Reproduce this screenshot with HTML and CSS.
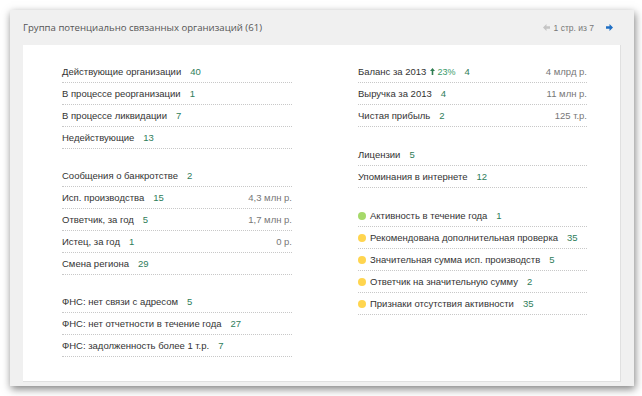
FILE: index.html
```html
<!DOCTYPE html>
<html lang="ru">
<head>
    <meta charset="UTF-8">
    <title>Группа потенциально связанных организаций</title>
    <link rel="stylesheet" href="styles.css">
</head>
<body>
    <div class="panel">
        <div class="panel-head">
            <span class="panel-title">Группа потенциально связанных организаций (61)</span>
            <div class="pager">
                <svg class="arrow" width="7" height="7" viewBox="0 0 7 7"><path d="M0 3.5 L3.5 0 V2.3 H7 V4.7 H3.5 V7 Z" fill="#c4c4c4"/></svg>
                <span class="pager-text">1 стр. из 7</span>
                <svg class="arrow" width="7" height="7" viewBox="0 0 7 7"><path d="M7 3.5 L3.5 0 V2.3 H0 V4.7 H3.5 V7 Z" fill="#1f6fc4"/></svg>
            </div>
        </div>

        <div class="panel-body">
            <!-- left column -->
            <div class="col">
                <div class="group">
                    <div class="row"><span class="label">Действующие организации</span><span class="num">40</span></div>
                    <div class="row"><span class="label">В процессе реорганизации</span><span class="num">1</span></div>
                    <div class="row"><span class="label">В процессе ликвидации</span><span class="num">7</span></div>
                    <div class="row"><span class="label">Недействующие</span><span class="num">13</span></div>
                </div>
                <div class="group">
                    <div class="row"><span class="label">Сообщения о банкротстве</span><span class="num">2</span></div>
                    <div class="row"><span class="label">Исп. производства</span><span class="num">15</span><span class="value">4,3 млн р.</span></div>
                    <div class="row"><span class="label">Ответчик, за год</span><span class="num">5</span><span class="value">1,7 млн р.</span></div>
                    <div class="row"><span class="label">Истец, за год</span><span class="num">1</span><span class="value">0 р.</span></div>
                    <div class="row"><span class="label">Смена региона</span><span class="num">29</span></div>
                </div>
                <div class="group">
                    <div class="row"><span class="label">ФНС: нет связи с адресом</span><span class="num">5</span></div>
                    <div class="row"><span class="label">ФНС: нет отчетности в течение года</span><span class="num">27</span></div>
                    <div class="row"><span class="label">ФНС: задолженность более 1 т.р.</span><span class="num">7</span></div>
                </div>
            </div>

            <!-- right column -->
            <div class="col right">
                <div class="group">
                    <div class="row">
                        <span class="label">Баланс за 2013</span>
                        <span class="growth"><svg width="5" height="7" viewBox="0 0 5 7"><path d="M2.5 0 L5 3 H3.3 V7 H1.7 V3 H0 Z" fill="#2f7d52"/></svg>23%</span>
                        <span class="num">4</span>
                        <span class="value">4 млрд р.</span>
                    </div>
                    <div class="row"><span class="label">Выручка за 2013</span><span class="num">4</span><span class="value">11 млн р.</span></div>
                    <div class="row"><span class="label">Чистая прибыль</span><span class="num">2</span><span class="value">125 т.р.</span></div>
                </div>
                <div class="group">
                    <div class="row"><span class="label">Лицензии</span><span class="num">5</span></div>
                    <div class="row"><span class="label">Упоминания в интернете</span><span class="num">12</span></div>
                </div>
                <div class="group">
                    <div class="row"><span class="dot green"></span><span class="label">Активность в течение года</span><span class="num">1</span></div>
                    <div class="row"><span class="dot yellow"></span><span class="label">Рекомендована дополнительная проверка</span><span class="num">35</span></div>
                    <div class="row"><span class="dot yellow"></span><span class="label">Значительная сумма исп. производств</span><span class="num">5</span></div>
                    <div class="row"><span class="dot yellow"></span><span class="label">Ответчик на значительную сумму</span><span class="num">2</span></div>
                    <div class="row"><span class="dot yellow"></span><span class="label">Признаки отсутствия активности</span><span class="num">35</span></div>
                </div>
            </div>
        </div>
    </div>
</body>
</html>
```

FILE: styles.css
```css
body {
    margin: 0;
    padding: 10px 8px 10px 10px;
    background-color: #fff;
    font-family: 'Liberation Sans', Arial, sans-serif;
    font-size: 9.5px;
    color: #333;
}

.panel {
    width: 624px;
    height: 376px;
    box-sizing: border-box;
    background-color: #f0f0f0;
    padding: 0 13px 4px 13px;
    box-shadow: 1px 3px 8px rgba(0, 0, 0, 0.5);
    display: flex;
    flex-direction: column;
}

.panel-head {
    height: 35px;
    display: flex;
    align-items: center;
    justify-content: space-between;
}

.panel-title {
    font-family: 'Open Sans', sans-serif;
    font-size: 9.6px;
    color: #555;
}

.pager {
    display: flex;
    align-items: center;
    padding-right: 8px;
}

.pager-text {
    font-size: 8.5px;
    color: #777;
    margin: 0 12px 0 4px;
}

.arrow {
    display: block;
}

.panel-body {
    flex: 1;
    background-color: #fff;
    border: 1px solid #e0e0e0;
    border-top: none;
    border-left: none;
    padding: 16px 33px 0 39px;
    display: grid;
    grid-template-columns: 230px 229px;
    column-gap: 66px;
    align-items: start;
}

.group {
    margin-bottom: 16px;
}

.right .group {
    margin-bottom: 17px;
}

.row {
    height: 21px;
    border-bottom: 1px dotted #c8c8c8;
    display: flex;
    align-items: center;
    white-space: nowrap;
}

.num {
    color: #2f7d5a;
    margin-left: 9px;
}

.value {
    margin-left: auto;
    color: #777;
}

.growth {
    color: #3a9a6a;
    font-size: 9px;
    margin-left: 4px;
    display: flex;
    align-items: center;
    gap: 2px;
}

.dot {
    flex-shrink: 0;
    width: 8px;
    height: 8px;
    border-radius: 50%;
    margin: 0 4px 0 0;
}

.green {
    background-color: #a6d96a;
}

.yellow {
    background-color: #ffd54f;
}
```
